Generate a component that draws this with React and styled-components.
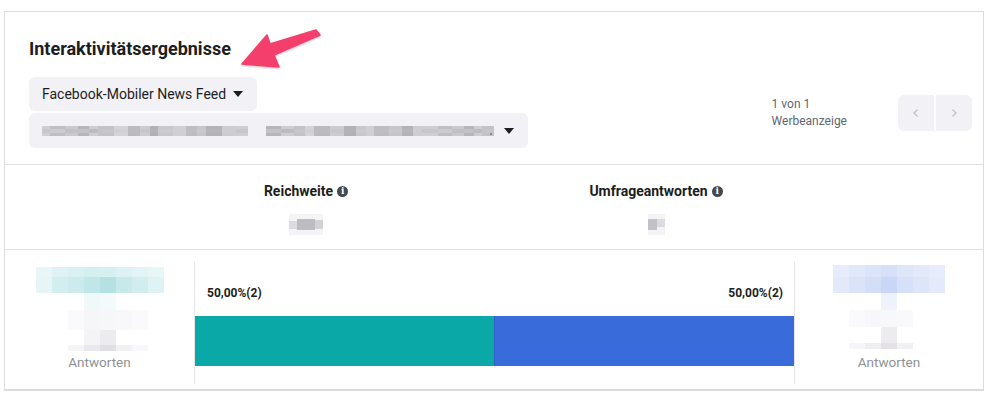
import React from "react";
import styled, { createGlobalStyle } from "styled-components";

const Global = createGlobalStyle`
  html, body { margin: 0; padding: 0; background: #ffffff; }
  body { font-family: Roboto, "Liberation Sans", Arial, sans-serif; color: #1c1e21; }
  * { box-sizing: border-box; }
`;

const Page = styled.div`
  position: relative;
  width: 994px;
  height: 409px;
  padding: 11px 0 0 4px;
`;

const Card = styled.div`
  width: 980px;
  height: 380px;
  background: #fff;
  border: 1px solid #dddde0;
  border-bottom: 2px solid #dcdcde;
  display: flex;
  flex-direction: column;
`;

const Header = styled.div`
  padding: 26px 11px 16px 24px;
  border-bottom: 1px solid #e0e0e3;
`;

const Title = styled.h2`
  margin: 0;
  font-size: 18px;
  line-height: 22px;
  font-weight: 700;
  color: #1c1e21;
`;

const ControlsRow = styled.div`
  margin-top: 17px;
  display: flex;
  align-items: center;
`;

const Selects = styled.div`
  display: flex;
  flex-direction: column;
  align-items: flex-start;
  gap: 2px;
`;

const Select = styled.div`
  display: flex;
  align-items: center;
  justify-content: space-between;
  background: #f2f1f5;
  border-radius: 6px;
  height: ${(p) => p.$h}px;
  width: ${(p) => p.$w}px;
  padding: 0 14px 0 13px;
  font-size: 14px;
  color: #1c1e21;
`;

const Caret = styled.span`
  width: 0;
  height: 0;
  border-left: 5.5px solid transparent;
  border-right: 5.5px solid transparent;
  border-top: 6px solid #1c1e21;
`;

const Pager = styled.div`
  margin-left: auto;
  display: flex;
  align-items: center;
  gap: 51px;
`;

const PagerText = styled.div`
  font-size: 12px;
  line-height: 17px;
  color: #606770;
`;

const NavGroup = styled.div`
  display: flex;
  gap: 2px;
  border-radius: 6px;
  overflow: hidden;
`;

const NavButton = styled.div`
  width: 36px;
  height: 36px;
  background: #f2f1f5;
  display: flex;
  align-items: center;
  justify-content: center;
  color: #bfc1c7;
`;

const Stats = styled.div`
  height: 85px;
  display: grid;
  grid-template-columns: 350px 350px;
  padding-left: 126px;
  border-bottom: 1px solid #e0e0e3;
`;

const Stat = styled.div`
  display: flex;
  flex-direction: column;
  align-items: center;
  padding-top: 18px;
`;

const StatLabel = styled.div`
  display: flex;
  align-items: center;
  gap: 4px;
  font-size: 14px;
  line-height: 17px;
  font-weight: 700;
  color: #1c1e21;
`;

const InfoIcon = styled.span`
  width: 11px;
  height: 11px;
  border-radius: 50%;
  background: #444950;
  color: #fff;
  font-size: 9px;
  font-weight: 700;
  line-height: 11px;
  text-align: center;
  font-family: "DejaVu Serif", serif;
`;

const StatValue = styled.svg`
  margin-top: 14px;
  display: block;
`;

const Results = styled.div`
  flex: 1;
  display: grid;
  grid-template-columns: 189px 601px 1fr;
  padding: 12px 0 5px;
`;

const Legend = styled.div`
  display: flex;
  flex-direction: column;
  align-items: center;
  padding-top: ${(p) => p.$top}px;
`;

const LegendLabel = styled.div`
  font-size: 13.5px;
  line-height: 16px;
  color: #909095;
  margin-top: ${(p) => p.$gap}px;
`;

const Chart = styled.div`
  border-left: 1px solid #e6e6e9;
  border-right: 1px solid #e6e6e9;
  display: flex;
  flex-direction: column;
`;

const ChartLabels = styled.div`
  display: flex;
  justify-content: space-between;
  padding: 24px 11px 0 12px;
  font-size: 12px;
  line-height: 14px;
  font-weight: 700;
  color: #1c1e21;
`;

const Bars = styled.div`
  margin-top: 16px;
  display: flex;
  height: 50px;
`;

const Bar = styled.div`
  flex: 1;
  background: ${(p) => p.$color};
  & + & {
    border-left: 1px solid #2f5fc6;
  }
`;

const Arrow = styled.svg`
  position: absolute;
  left: 236px;
  top: 26px;
  filter: drop-shadow(0 1px 1px rgba(120, 0, 30, 0.25));
`;

const BlurText = styled.svg`
  display: block;
`;

/* blurred text strip */
const shades = [
  "#cfced3", "#bfbec3", "#cac9ce", "#b6b5ba", "#cecdd2", "#c3c2c7", "#d4d3d8", "#bbbabf",
  "#cccbd0", "#b2b1b6", "#c8c7cc", "#d0cfd4", "#bebdc2", "#c6c5ca", "#b4b3b8", "#cdccd1",
];

function BlurredLine() {
  const cells = [];
  let x = 0;
  let i = 0;
  while (x < 452) {
    const w = 8 + ((i * 7) % 9);
    const gap = x > 205 && x < 218;
    if (!gap) {
      cells.push(
        <rect key={i} x={x} y={0} width={w} height={10} fill={shades[i % shades.length]} />
      );
      cells.push(
        <rect key={"b" + i} x={x} y={3} width={w} height={4} fill={shades[(i + 5) % shades.length]} opacity="0.6" />
      );
    }
    x += w;
    i++;
  }
  return (
    <BlurText width="452" height="10" viewBox="0 0 452 10">
      {cells}
      <rect x="448" y="7" width="2" height="2" fill="#888" />
    </BlurText>
  );
}

function TealLegend() {
  const rowA = ["#e9f6f8", "#dff3f4", "#d9f1f2", "#d3eff0", "#d6f0f1", "#ddf2f4", "#e2f4f5", "#e7f6f7"];
  const rowB = ["#e6f5f6", "#d3eeef", "#cdebec", "#c0e6e7", "#b5e1e2", "#c7e9ea", "#d2eded", "#e0f3f4"];
  return (
    <svg width="128" height="84" viewBox="0 0 128 84">
      {rowA.map((c, i) => <rect key={"a" + i} x={i * 16} y={0} width={16} height={10} fill={c} />)}
      {rowB.map((c, i) => <rect key={"b" + i} x={i * 16} y={10} width={16} height={16} fill={c} />)}
      <rect x="48" y="26" width="16" height="17" fill="#f0f9fa" />
      <rect x="64" y="26" width="16" height="17" fill="#f3fafb" />
      <rect x="32" y="43" width="16" height="20" fill="#faf9fb" />
      <rect x="48" y="43" width="16" height="20" fill="#f6f5f8" />
      <rect x="64" y="43" width="16" height="20" fill="#f7f6f9" />
      <rect x="80" y="43" width="16" height="20" fill="#f8f7fa" />
      <rect x="96" y="43" width="16" height="20" fill="#faf9fb" />
      <rect x="48" y="63" width="16" height="15" fill="#f4f3f6" />
      <rect x="64" y="63" width="16" height="15" fill="#ecebef" />
      <rect x="32" y="78" width="16" height="6" fill="#f5f4f7" />
      <rect x="48" y="78" width="16" height="6" fill="#e9e8ec" />
      <rect x="64" y="78" width="16" height="6" fill="#e1dfe5" />
      <rect x="80" y="78" width="16" height="6" fill="#f1f0f3" />
      <rect x="96" y="78" width="16" height="6" fill="#f8f8fa" />
    </svg>
  );
}

function BlueLegend() {
  const rowA = ["#e6ecfb", "#e1e8fa", "#dce4f9", "#d6e0f8", "#dee6f9", "#e3e9fb", "#e6ecfb"];
  const rowB = ["#e2e9fa", "#dbe3f9", "#d3def7", "#c9d6f5", "#d6e0f8", "#dde5f9", "#e4eafb"];
  return (
    <svg width="112" height="84" viewBox="0 0 112 84">
      {rowA.map((c, i) => <rect key={"a" + i} x={i * 16} y={0} width={16} height={12} fill={c} />)}
      {rowB.map((c, i) => <rect key={"b" + i} x={i * 16} y={12} width={16} height={16} fill={c} />)}
      <rect x="48" y="28" width="16" height="17" fill="#eef2fc" />
      <rect x="16" y="45" width="16" height="17" fill="#faf9fb" />
      <rect x="32" y="45" width="16" height="17" fill="#f7f7fa" />
      <rect x="48" y="45" width="16" height="17" fill="#f8f8fa" />
      <rect x="64" y="45" width="16" height="17" fill="#f9f9fb" />
      <rect x="48" y="62" width="16" height="16" fill="#ecebef" />
      <rect x="16" y="78" width="16" height="6" fill="#f6f5f8" />
      <rect x="32" y="78" width="16" height="6" fill="#efeef2" />
      <rect x="48" y="78" width="16" height="6" fill="#e3e1e6" />
      <rect x="64" y="78" width="16" height="6" fill="#f1f0f3" />
    </svg>
  );
}

function ValueBlur({ wide }) {
  if (wide) {
    return (
      <StatValue width="34" height="21" viewBox="0 0 34 21">
        <rect x="0" y="0" width="34" height="21" fill="#f4f4f6" />
        <rect x="0" y="7" width="8" height="8" fill="#dcdbdf" />
        <rect x="8" y="5" width="18" height="11" fill="#bdbcc0" />
        <rect x="26" y="6" width="8" height="9" fill="#d2d1d5" />
      </StatValue>
    );
  }
  return (
    <StatValue width="17" height="21" viewBox="0 0 17 21">
      <rect x="0" y="0" width="17" height="21" fill="#f4f4f6" />
      <rect x="0" y="5" width="9" height="11" fill="#c2c1c5" />
      <rect x="9" y="5" width="8" height="8" fill="#dcdbdf" />
    </StatValue>
  );
}

export default function App() {
  return (
    <>
      <Global />
      <Page>
        <Card>
          <Header>
            <Title>Interaktivitätsergebnisse</Title>
            <ControlsRow>
              <Selects>
                <Select $w={228} $h={34}>
                  <span>Facebook-Mobiler News Feed</span>
                  <Caret />
                </Select>
                <Select $w={499} $h={35}>
                  <BlurredLine />
                  <Caret />
                </Select>
              </Selects>
              <Pager>
                <PagerText>
                  1 von 1
                  <br />
                  Werbeanzeige
                </PagerText>
                <NavGroup>
                  <NavButton>
                    <svg width="14" height="14" viewBox="0 0 14 14" fill="none" stroke="currentColor" strokeWidth="1.3">
                      <path d="M8.5 3.5 5 7l3.5 3.5" />
                    </svg>
                  </NavButton>
                  <NavButton>
                    <svg width="14" height="14" viewBox="0 0 14 14" fill="none" stroke="currentColor" strokeWidth="1.3">
                      <path d="M5.5 3.5 9 7l-3.5 3.5" />
                    </svg>
                  </NavButton>
                </NavGroup>
              </Pager>
            </ControlsRow>
          </Header>
          <Stats>
            <Stat>
              <StatLabel>
                Reichweite <InfoIcon>i</InfoIcon>
              </StatLabel>
              <ValueBlur wide />
            </Stat>
            <Stat>
              <StatLabel>
                Umfrageantworten <InfoIcon>i</InfoIcon>
              </StatLabel>
              <ValueBlur />
            </Stat>
          </Stats>
          <Results>
            <Legend $top={5}>
              <TealLegend />
              <LegendLabel $gap={3}>Antworten</LegendLabel>
            </Legend>
            <Chart>
              <ChartLabels>
                <span>50,00%(2)</span>
                <span>50,00%(2)</span>
              </ChartLabels>
              <Bars>
                <Bar $color="#0aa8a7" />
                <Bar $color="#3a6bdb" />
              </Bars>
            </Chart>
            <Legend $top={3}>
              <BlueLegend />
              <LegendLabel $gap={5}>Antworten</LegendLabel>
            </Legend>
          </Results>
        </Card>
        <Arrow width="90" height="50" viewBox="236 26 90 50">
          <polygon points="242,64 267,35 270,44 316,30 320,35 274,55 279,67" fill="#f43f6d" strokeLinejoin="round" stroke="#f43f6d" strokeWidth="1.5" />
        </Arrow>
      </Page>
    </>
  );
}
